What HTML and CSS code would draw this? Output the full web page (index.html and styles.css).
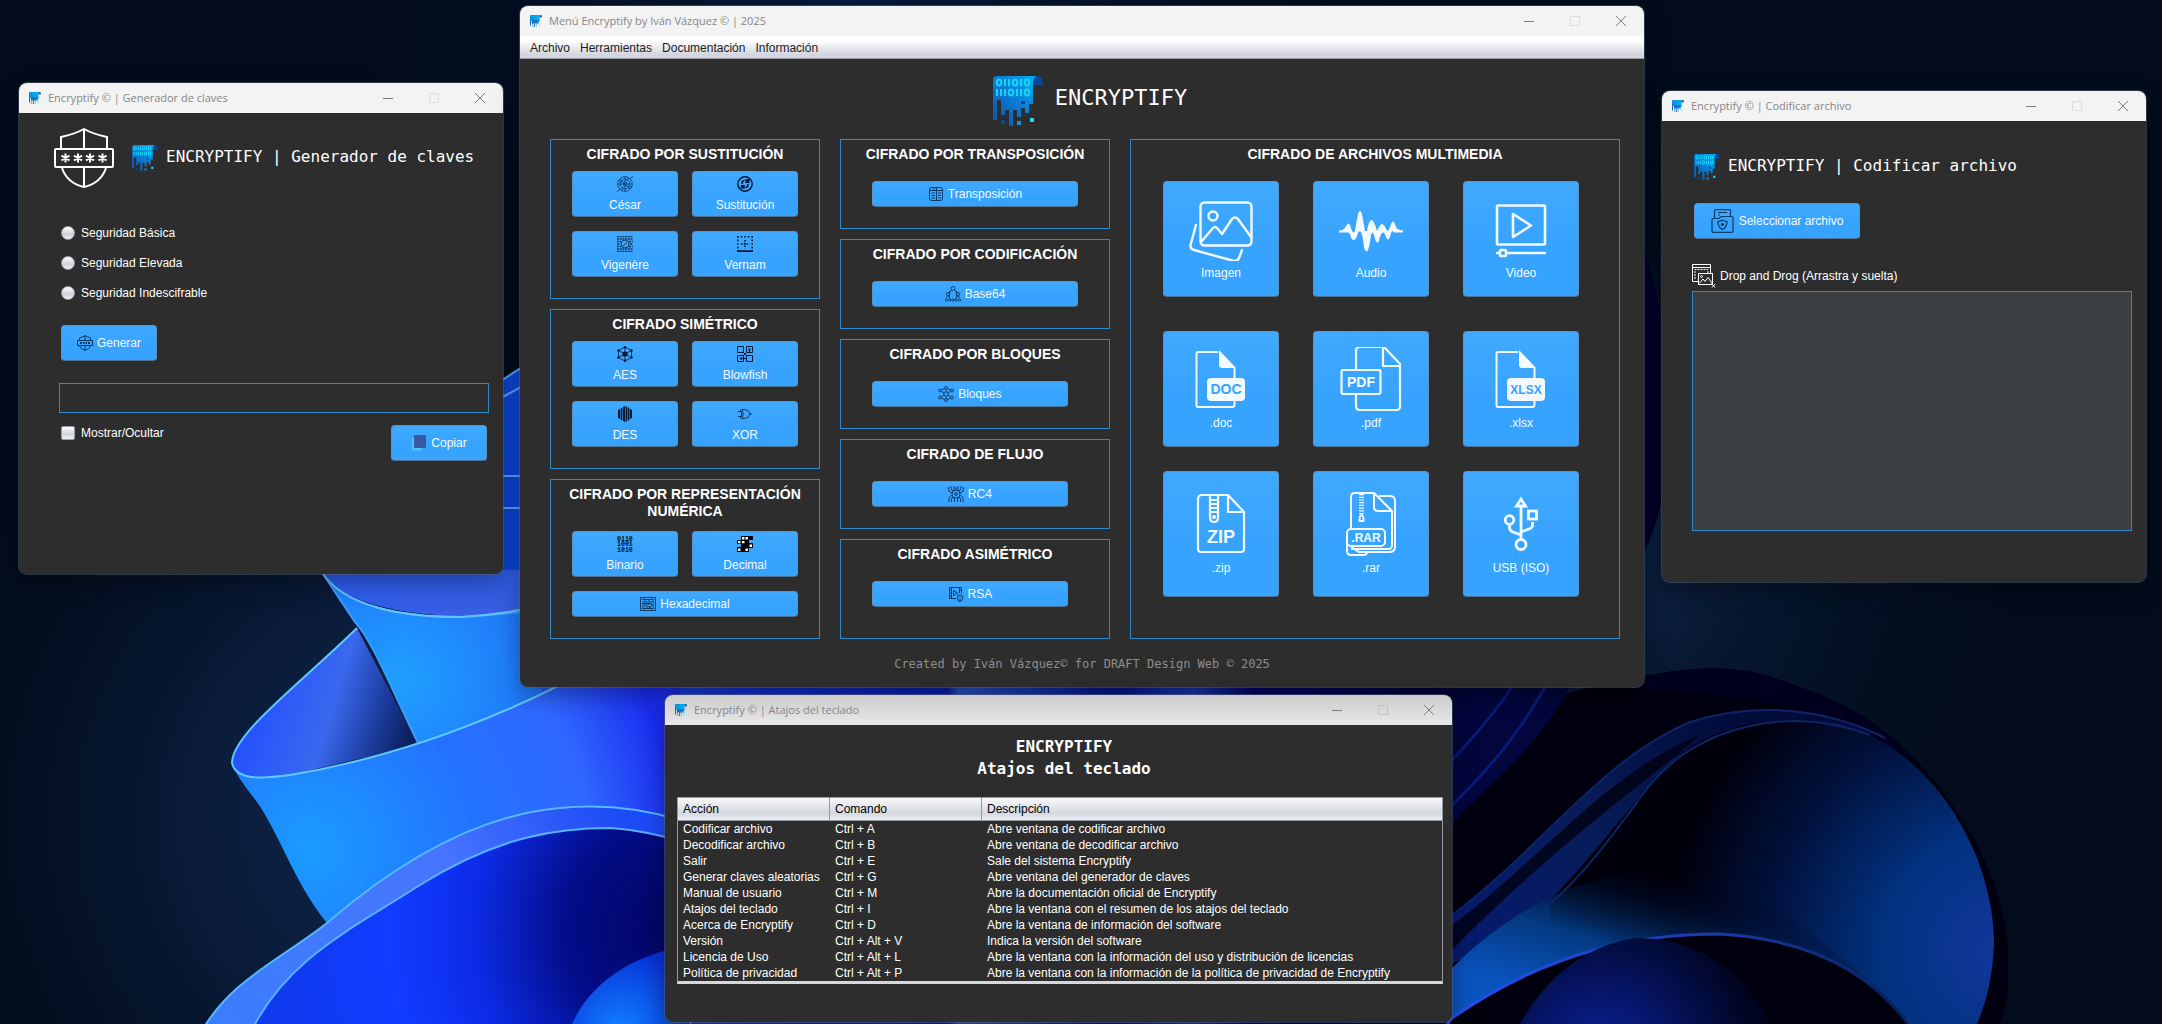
FILE: index.html
```html
<!DOCTYPE html>
<html lang="es">
<head>
<meta charset="utf-8">
<meta name="viewport" content="width=device-width, initial-scale=1">
<title>Encryptify</title>
<link rel="stylesheet" href="styles.css">
</head>
<body>
<svg class="sprite" aria-hidden="true">
  <defs>
    <linearGradient id="logo-fill" x1="0" y1="1" x2="1" y2="0">
      <stop offset="0" stop-color="#0b50a8"/><stop offset=".45" stop-color="#0c78cf"/><stop offset="1" stop-color="#00aef4"/>
    </linearGradient>
  </defs>
  <symbol id="logo" viewBox="0 0 50 50">
    <path fill="url(#logo-fill)" d="M0 4Q0 0 4 0H44Q40 3 40 8V28H36V37H32V32H28V41H24V34H20V50H16V34H12V39H8V24H4V44H0Z"/>
    <path fill="#0a479c" d="M40 9Q40 0 45 0Q50 0 50 9ZM28 25H32V28H28ZM8 44H12V48H8Z"/>
    <path fill="#1d8fd6" d="M24 45H28V49H24Z"/>
    <path fill="#14e0f5" d="M37 42H41V46H37Z"/>
    <g fill="none" stroke="#17d4fa" stroke-width="2">
      <ellipse cx="6" cy="6.500" rx="2.300" ry="3"/><ellipse cx="22" cy="6.500" rx="2.300" ry="3"/><ellipse cx="34" cy="6.500" rx="2.300" ry="3"/>
      <path d="M12 3v7M16 3v7M28 3v7M4 13v7M8 13v7M12 13v7M24 13v7M28 13v7"/>
      <ellipse cx="18" cy="16.500" rx="2.300" ry="3"/><ellipse cx="34" cy="16.500" rx="2.300" ry="3"/>
    </g>
  </symbol>
  <symbol id="shield" viewBox="0 0 60 60">
    <g fill="none" stroke="currentColor" stroke-width="2">
      <path d="M7 20V9Q21 6 30 1Q39 6 53 9V20M30 1V20M8 40Q13 55 30 59Q47 55 52 40M30 40V59"/>
      <rect x="1" y="21" width="58" height="18" rx="1"/>
      <path d="M11.500 25.500v9M7.500 27.700l8 4.600M15.500 27.700l-8 4.600M24 25.500v9M20 27.700l8 4.600M28 27.700l-8 4.600M36 25.500v9M32 27.700l8 4.600M40 27.700l-8 4.600M48.500 25.500v9M44.500 27.700l8 4.600M52.500 27.700l-8 4.600"/>
    </g>
  </symbol>
  <symbol id="shield-sm" viewBox="0 0 16 16">
    <g fill="none" stroke="currentColor">
      <path d="M2.500 5V3L8 .700 13.500 3V5M8 .700V5M2.500 11Q4 14.500 8 15.300Q12 14.500 13.500 11M8 11V15.300"/>
      <rect x=".5" y="5.500" width="15" height="5"/><path stroke-width="2" d="M3 8h2M6 8h1.500M8.500 8H10M11 8h2"/>
    </g>
  </symbol>
  <symbol id="copy" viewBox="0 0 16 16">
    <path fill="#4fc3ff" d="M1 3H4V13H11V15.500H1Z"/><rect x="3" y="0" width="12" height="13" rx="1" fill="#37599f"/>
  </symbol>
  <symbol id="folder" viewBox="0 0 24 24">
    <g fill="none" stroke="currentColor" stroke-width="1.200">
      <path d="M1 22V11Q1 9.500 2.500 9.500H8L10.500 7.500H20.500Q22 7.500 22 9V22Q22 23.300 20.500 23.300H2.500Q1 23.300 1 22Z"/>
      <path d="M3.500 9V1.500Q3.500 .700 4.500 .700H18.500Q19.500 .700 19.500 1.500V7M7 3.500H16M7 6H9"/>
      <path d="M11.500 11Q13.500 12.500 16 12.500Q16 18.500 11.500 20.500Q7 18.500 7 12.500Q9.500 12.500 11.500 11Z"/>
    </g><circle cx="11.500" cy="15.500" r="1.600" fill="currentColor"/>
  </symbol>
  <symbol id="drop" viewBox="0 0 24 24">
    <g fill="none" stroke="currentColor">
      <path d="M6 17.500H.500V.500H18.500V9M.500 3.500H18.500"/><path stroke-dasharray="2 1" d="M3 15V5.500H16V9"/>
      <rect x="6.500" y="9.500" width="14" height="11"/><circle cx="9.500" cy="12.500" r="1"/>
      <path d="M7.500 19L11 15L13 17.500L16 13.500L20 19M19.500 19.500L23 23.500M23 20L20 23.500"/>
    </g>
  </symbol>
  <symbol id="cesar" viewBox="0 0 16 16">
    <g fill="none" stroke="currentColor" stroke-width=".8"><circle cx="8" cy="8" r="7.300"/><circle cx="8" cy="8" r="4.800"/><circle cx="8" cy="8" r="2"/>
    <path d="M8 .700V15.300M.700 8H15.300M3 3L13 13M13 3L16 0M3 13L0 16M1.500 4.500L5 6M11 10l4 1.500M4.500 14.500L6 11M11.500 1.500L10 5"/></g>
  </symbol>
  <symbol id="sustitucion" viewBox="0 0 16 16">
    <circle cx="8" cy="8" r="7.200" fill="none" stroke="currentColor" stroke-width="1.400"/>
    <path fill="currentColor" d="M8.500 3H12.500V7H8.500ZM3.800 9H7.800V12.500H3.800ZM4.500 8V5L7.500 3.500V5L6 6V8ZM11.500 8V11L8.500 12.500V11L10 10V8Z"/>
  </symbol>
  <symbol id="vigenere" viewBox="0 0 16 16">
    <path stroke="currentColor" stroke-width="1.300" stroke-dasharray="2 .7" d="M0 .500H16M0 3H16M0 13H16M0 15.500H16M0 5.500H4M0 8H3M0 10.500H4M12 5.500H16M13 8H16M12 10.500H16"/>
    <circle cx="8" cy="8" r="4" fill="none" stroke="currentColor"/><path stroke="currentColor" d="M6 10L10 6"/>
  </symbol>
  <symbol id="vernam" viewBox="0 0 16 16">
    <g fill="none" stroke="currentColor" stroke-width="1.600"><path stroke-dasharray="1.700 1.875" d="M0 .800H16M.800 0V16M15.200 0V16"/><path stroke-dasharray="1.500 1.250" d="M4 8H12.500M8 4V12.500"/><path stroke-width="1.800" d="M0 15.100H16"/></g>
  </symbol>
  <symbol id="aes" viewBox="0 0 16 16">
    <path fill="none" stroke="currentColor" stroke-width=".8" d="M8 1L14.500 4.500V11.500L8 15L1.500 11.500V4.500ZM8 1V15M1.500 4.500L14.500 11.500M14.500 4.500L1.500 11.500"/>
    <g fill="currentColor"><circle cx="8" cy="8" r="2.600"/><circle cx="8" cy="1.300" r="1.200"/><circle cx="8" cy="14.700" r="1.200"/><circle cx="1.500" cy="4.500" r="1.200"/><circle cx="14.500" cy="4.500" r="1.200"/><circle cx="1.500" cy="11.500" r="1.200"/><circle cx="14.500" cy="11.500" r="1.200"/></g>
  </symbol>
  <symbol id="blowfish" viewBox="0 0 16 16">
    <path fill="none" stroke="currentColor" d="M.500 .500H6.500V6.500H.500ZM9.500 6.500V.500H15.500V6.500ZM9.500 15.500V9.500H15.500V15.500ZM6.500 9.500H.500V15.500H6.500ZM12.500 3V6M6 6L10 10M3 12.500H9.500M9.500 6.500L6.500 9.500"/>
    <path fill="currentColor" d="M7 7h2v2H7zM11.500 2.500h2v2h-2zM3 11.500h2v2H3z"/>
  </symbol>
  <symbol id="des" viewBox="0 0 16 16">
    <path fill="currentColor" d="M1 4L3 3V13L1 12ZM3.600 2.500L5.400 1.500V14.500L3.600 13.500ZM6 1L8 0V16L6 15ZM8.600 0L10 .700V15.300L8.600 16ZM10.600 1.200L12.400 2V14L10.600 14.800ZM13 3L15 4V12L13 13Z"/>
  </symbol>
  <symbol id="xor" viewBox="0 0 16 16">
    <path fill="none" stroke="currentColor" d="M3.500 3.500Q6 8 3.500 12.500M5 3.500H8Q12 4 13 8Q12 12 8 12.500H5Q7.500 8 5 3.500M1 5.500H4.500M1 10.500H4.500M13 8H15"/>
  </symbol>
  <symbol id="decimal" viewBox="0 0 16 16">
    <path d="M4 0H16V4H12V7H16V12H12V16H0V11H4V8H0V4H4Z"/>
    <path fill="#fff" d="M5 1h2.500v2.500H5zM8.500 1H11v2.500H8.500zM1 5h2.500v2.200H1zM5 5h2.500v2.200H5zM12.500 8.500h2.500v2.500h-2.500zM1 12.500h2.500V15H1zM8.500 12.500H11V15H8.500z"/>
  </symbol>
  <symbol id="hexadecimal" viewBox="0 0 16 16">
    <path fill="none" stroke="currentColor" d="M.500 1.500H15.500V14.500H.500ZM2 3.500H14M2 12.500H14M3 5V12M5 4V11M7 5V12M9 4V9M11 5V9M13 4V12M2 7.500H10M8 10L12 13M12 9L9 12"/>
  </symbol>
  <symbol id="transposicion" viewBox="0 0 16 16">
    <g fill="none" stroke="currentColor"><rect x="1.500" y="1.500" width="13" height="13" rx="2"/><path d="M1.500 4.500H14.500M6 1.500V4.500M8.500 1.500V14.500M3.500 7H7M3.500 9.500H7M3.500 12H7M10 7H13M10 9.500H13M10 12H13"/></g>
  </symbol>
  <symbol id="base64" viewBox="0 0 16 16">
    <g fill="none" stroke="currentColor" stroke-width=".9"><circle cx="8" cy="2.500" r="2"/><circle cx="3" cy="8" r="1.600"/><circle cx="13" cy="8" r="1.600"/><circle cx="1.500" cy="14" r="1.200"/><circle cx="5" cy="14" r="1.200"/><circle cx="8" cy="14" r="1.200"/><circle cx="11" cy="14" r="1.200"/><circle cx="14.500" cy="14" r="1.200"/><path d="M6.500 4L4 6.500M9.500 4L12 6.500M2.500 9.500L1.500 12.500M3.500 9.500L5 12.500M12.500 9.500L11 12.500M13.500 9.500L14.500 12.500M5 5L4 11M11 5L12 11"/></g>
  </symbol>
  <symbol id="bloques" viewBox="0 0 16 16">
    <g fill="none" stroke="currentColor"><circle cx="8" cy="8" r="2.200"/><circle cx="8" cy="2" r="1.500"/><circle cx="8" cy="14" r="1.500"/><circle cx="2" cy="4.500" r="1.400"/><circle cx="14" cy="4.500" r="1.400"/><circle cx="2" cy="11.500" r="1.400"/><circle cx="14" cy="11.500" r="1.400"/><path d="M8 3.500V5.500M8 10.500V12.500M3.500 5L6 7M12.500 5L10 7M3.500 11L6 9M12.500 11L10 9M3.500 4L6.500 2.500M12.500 4L9.500 2.500M3.500 12L6.500 13.500M12.500 12L9.500 13.500"/></g>
  </symbol>
  <symbol id="rc4" viewBox="0 0 16 16">
    <g fill="none" stroke="currentColor"><circle cx="8" cy="8" r="4"/><circle cx="8" cy="8" r="1.300"/><path d="M.700 1V5L4 7M15.300 1V5L12 7M3 0V3L5 5M13 0V3L11 5M6 0V4M10 0V4M8 1V4M3.500 9L1 12V16M12.500 9L15 12V16M5 11L3.500 13V16M11 11L12.500 13V16M6.500 12V16M9.500 12V16"/></g>
  </symbol>
  <symbol id="rsa" viewBox="0 0 16 16">
    <g fill="none" stroke="currentColor"><path d="M8 12.500H1.500V1.500H13.500V7M3.500 1.500V12.500M11.500 1.500V7M1.500 4H3.500M1.500 7H3.500M1.500 10H3.500M11.500 4H13.500M5.500 4.500L9.500 7L5.500 9.500Z"/><circle cx="12" cy="11.500" r="2.800"/><path d="M11 11H13M9.500 14L11 15.500L13 15L14.500 14"/></g>
  </symbol>
  <symbol id="imagen" viewBox="0 0 64 64">
    <g fill="none" stroke="currentColor" stroke-width="2.400" stroke-linejoin="round" stroke-linecap="round"><rect x="11.500" y="5.500" width="51" height="43" rx="4"/><circle cx="24" cy="19" r="4.500"/><path d="M12 45L24 31Q26 29 28 31L33 37L43 22Q46 19 49 22L62 40M7 28L1.500 48Q1 52 5 53L45 64Q49 64 50 61L53 53"/></g>
  </symbol>
  <symbol id="audio" viewBox="0 0 64 64">
    <path fill="currentColor" d="M0 33.500Q5 33.500 7 29Q10 23 12 31Q14 38 16 34Q17 26 19 17Q21 11 23 17Q25 28 26 34L28 34Q30 22 33 23Q36 26 38 34Q41 27 43 27Q46 28 48 34Q50 34 52 27Q54 22 56 27Q57 33 64 33.500V35.500H55Q53 31 51 40Q49 45 47 40Q45 34 43 36Q41 38 40 44Q38 48 36 42Q34 32 32 38Q31 48 29 53Q27 57 25 50Q24 40 22 35Q20 33 19 36Q17 43 15 43Q12 43 11 37L9 35.500H0Z"/>
  </symbol>
  <symbol id="video" viewBox="0 0 64 64">
    <g fill="none" stroke="currentColor" stroke-width="2.600" stroke-linejoin="round" stroke-linecap="round"><rect x="8" y="8.500" width="48" height="39" rx="1"/><path d="M24 17V40L42 28.500ZM8 56H10M18 56H56"/><rect x="11" y="53" width="6" height="6" rx="1"/></g>
  </symbol>
  <symbol id="office" viewBox="0 0 64 64">
    <path fill="none" stroke="currentColor" stroke-width="2" d="M29 5H9Q7.500 5 7.500 7V58Q7.500 60 9 60H43Q45.500 60 45.500 58V54M45.500 21V31"/>
    <path fill="currentColor" d="M30 3L47 21H33Q30 21 30 18Z"/><rect x="18" y="31" width="38" height="23" rx="4" fill="currentColor"/>
  </symbol>
  <symbol id="pdf" viewBox="0 0 64 64">
    <g fill="none" stroke="currentColor" stroke-width="2.200" stroke-linejoin="round"><path d="M17 23V4Q17 0 21 0H45L61 17V59Q61 63 57 63H21Q17 63 17 59V47M44 0V19H61"/><rect x="2.500" y="23" width="39" height="24" rx="2"/></g>
  </symbol>
  <symbol id="zip" viewBox="0 0 64 64">
    <g fill="none" stroke="currentColor" stroke-width="2.200" stroke-linejoin="round"><path d="M13 3H39L55 20V57Q55 60 52 60H12Q9 60 9 57V7Q9 3 13 3ZM39 3V20H55M21 4V25Q21 30 25 30Q29 30 29 25V4M21 8H29M21 12H29M21 16H29M21 20H29"/></g>
    <circle cx="25" cy="25" r="2" fill="currentColor"/>
  </symbol>
  <symbol id="rar" viewBox="0 0 64 64">
    <g fill="none" stroke="currentColor" stroke-width="2"><path d="M12 36V5Q12 1 16 1H35L53 19V53Q53 57 49 57H12M35 1V15Q35 19 39 19H53M40 4H51Q56 4 56 9V55Q56 60 50 60H28"/><rect x="8" y="37" width="38" height="17" rx="4"/><path d="M8 44V59Q8 63 12 63H24Q28 63 28 60H20Q16 57 12 55"/><path stroke-width="5" stroke-dasharray="1.200 1.500" d="M22.500 2V22"/><path d="M20.500 29Q20.500 23 22.500 23Q24.500 23 24.500 29Z"/></g>
  </symbol>
  <symbol id="usb" viewBox="0 0 64 64">
    <g fill="none" stroke="currentColor" stroke-width="2.800"><path d="M32 14V47M32 7L27.500 14H36.500ZM20.500 32V36Q21 39 24 40L32 43M43.500 30V34Q43 36 40 37L32 40"/><circle cx="20.500" cy="28" r="4.300"/><rect x="39.500" y="19" width="8" height="8"/><circle cx="32" cy="52.500" r="5"/></g>
  </symbol>
</svg>

<main class="desktop">
  <svg class="wallpaper" viewBox="0 0 2162 1024" preserveAspectRatio="xMidYMid slice" aria-hidden="true">
    <defs>
      <radialGradient id="w-left" gradientUnits="userSpaceOnUse" cx="420" cy="820" r="560"><stop offset="0" stop-color="#0e2648"/><stop offset=".4" stop-color="#0a1c3a"/><stop offset="1" stop-color="#020c1c" stop-opacity="0"/></radialGradient>
      <radialGradient id="w-right" gradientUnits="userSpaceOnUse" cx="1600" cy="560" r="460"><stop offset="0" stop-color="#0d2548"/><stop offset="1" stop-color="#020c1c" stop-opacity="0"/></radialGradient>
      <radialGradient id="w-top" gradientUnits="userSpaceOnUse" cx="850" cy="60" r="560"><stop offset="0" stop-color="#0a1e44"/><stop offset="1" stop-color="#020c1c" stop-opacity="0"/></radialGradient>
      <linearGradient id="p-cup" x1="0" y1="0" x2="1" y2="1"><stop offset="0" stop-color="#2a5cf0"/><stop offset="1" stop-color="#3a5ee0"/></linearGradient>
      <radialGradient id="p-a" gradientUnits="userSpaceOnUse" cx="400" cy="680" r="170"><stop offset="0" stop-color="#1fa0ff"/><stop offset="1" stop-color="#1f6cf8"/></radialGradient>
      <linearGradient id="p-back" gradientUnits="userSpaceOnUse" x1="250" y1="690" x2="410" y2="740"><stop offset="0" stop-color="#2350ff"/><stop offset=".5" stop-color="#3a68ee"/><stop offset=".8" stop-color="#1a3a98"/><stop offset="1" stop-color="#0b1f5c"/></linearGradient>
      <radialGradient id="p-b" gradientUnits="userSpaceOnUse" cx="310" cy="850" r="370"><stop offset="0" stop-color="#1a9cff"/><stop offset=".45" stop-color="#2372ff"/><stop offset=".75" stop-color="#3068ff"/><stop offset="1" stop-color="#1a2cf0"/></radialGradient>
      <linearGradient id="p-c" gradientUnits="userSpaceOnUse" x1="230" y1="1024" x2="620" y2="810"><stop offset="0" stop-color="#3b7dfc"/><stop offset=".6" stop-color="#4775ff"/><stop offset="1" stop-color="#1c4af5"/></linearGradient>
      <radialGradient id="p-core" gradientUnits="userSpaceOnUse" cx="690" cy="930" r="400"><stop offset="0" stop-color="#02055e"/><stop offset=".3" stop-color="#030c86"/><stop offset=".55" stop-color="#0c2ce8"/><stop offset=".75" stop-color="#123cff"/><stop offset="1" stop-color="#0f3af0"/></radialGradient>
      <radialGradient id="p-bud" gradientUnits="userSpaceOnUse" cx="620" cy="1030" r="80"><stop offset="0" stop-color="#1080ff"/><stop offset="1" stop-color="#0832d8"/></radialGradient>
      <linearGradient id="p-mid" gradientUnits="userSpaceOnUse" x1="540" y1="0" x2="1560" y2="0"><stop offset="0" stop-color="#2a58ec"/><stop offset=".2" stop-color="#1230d8"/><stop offset=".4" stop-color="#0a20b0"/><stop offset=".41" stop-color="#2c56cc"/><stop offset=".5" stop-color="#1230b0"/><stop offset=".56" stop-color="#061290"/><stop offset=".64" stop-color="#1a38b8"/><stop offset=".7" stop-color="#02046a"/><stop offset="1" stop-color="#01021c"/></linearGradient>
      <radialGradient id="r-lit" gradientUnits="userSpaceOnUse" cx="2000" cy="950" r="330"><stop offset="0" stop-color="#12379c"/><stop offset=".35" stop-color="#023280"/><stop offset=".7" stop-color="#01123e"/><stop offset="1" stop-color="#00000c"/></radialGradient>
      <linearGradient id="r-band" gradientUnits="userSpaceOnUse" x1="1600" y1="1010" x2="1640" y2="865"><stop offset="0" stop-color="#0a54c0"/><stop offset=".45" stop-color="#033a80"/><stop offset="1" stop-color="#000014" stop-opacity="0"/></linearGradient>
      <radialGradient id="r-bud" gradientUnits="userSpaceOnUse" cx="1600" cy="1060" r="160"><stop offset="0" stop-color="#0b22a0"/><stop offset="1" stop-color="#00041e"/></radialGradient>
      <linearGradient id="r-ridge" gradientUnits="userSpaceOnUse" x1="1452" y1="960" x2="1750" y2="720"><stop offset="0" stop-color="#061a70"/><stop offset=".5" stop-color="#071c58"/><stop offset="1" stop-color="#020a38"/></linearGradient>
      <linearGradient id="r-edge" gradientUnits="userSpaceOnUse" x1="1452" y1="0" x2="1900" y2="0"><stop offset="0" stop-color="#2450f0"/><stop offset=".6" stop-color="#1a38a8"/><stop offset="1" stop-color="#08205c"/></linearGradient>
    </defs>
    <rect width="2162" height="1024" fill="#020c1c"/>
    <rect width="2162" height="1024" fill="url(#w-left)"/><rect width="2162" height="1024" fill="url(#w-right)"/><rect width="2162" height="1024" fill="url(#w-top)"/>
    <path fill="#00002a" d="M1600 180C1650 230 1668 320 1668 400S1662 520 1640 560Z"/>
    <path fill="#0b47dc" d="M480 396L530 360V640H480Z"/>
    <path fill="none" stroke="#5aa8ff" stroke-width="2" d="M490 388L530 362M490 404L530 382M495 476H530M495 508H530"/>
    <path fill="url(#p-back)" d="M357 628C300 684 232 734 232 763C235 780 262 778 290 775L418 745Z"/>
    <path fill="url(#p-cup)" d="M323 570H530V612C480 622 350 618 323 574Z"/>
    <path fill="url(#p-a)" stroke="#3c9cff" stroke-width="2" d="M323 574C345 606 400 617 460 617Q500 615 640 600V700L418 743C392 690 372 640 355 622Z"/>
    <path fill="none" stroke="#63c4ff" stroke-width="2" d="M323 574C345 606 400 617 460 617Q500 615 540 606"/>
    <path fill="url(#p-mid)" d="M540 680H1570L1450 1024H600Z"/>
    <path fill="url(#p-b)" d="M232 763C236 782 268 778 290 775C380 760 460 735 560 685H680V1000H340L327 923C300 890 285 850 268 820C255 795 240 785 232 763Z"/>
    <path fill="none" stroke="#5fc8ff" stroke-width="2" d="M357 628C300 684 232 734 232 763C236 782 268 778 290 775C380 760 470 730 560 685"/>
    <path fill="url(#p-c)" stroke="#58b8ff" stroke-width="2" d="M200 1034C230 980 280 960 327 923C400 860 480 815 560 808C600 804 640 808 680 820V1040H200Z"/>
    <path fill="url(#p-core)" stroke="#58b0ff" stroke-width="2" d="M250 1034C285 960 350 930 420 885C500 835 560 828 610 828Q645 830 690 844V1040H250Z"/>
    <path fill="url(#p-bud)" d="M568 1034C585 985 630 955 690 945V1034Z"/>
    <path fill="#000010" d="M1452 1024V820C1500 760 1530 700 1580 690C1700 660 1745 667 1780 680C1840 700 1880 720 1920 765C1980 830 2008 900 2008 960Q2010 1000 2000 1024Z"/>
    <path fill="#02063c" d="M1452 687H1570C1530 760 1480 790 1452 825Z"/>
    <path fill="none" stroke="#0a1a78" stroke-width="3" d="M1452 760Q1490 720 1512 687M1452 805Q1510 750 1545 687"/>
    <path fill="#00001e" d="M1600 686C1700 660 1745 667 1780 680C1840 700 1880 720 1920 765L1870 735C1800 700 1700 690 1600 686Z"/>
    <path fill="url(#r-ridge)" d="M1452 915C1540 850 1600 760 1690 722C1760 700 1830 710 1885 738C1800 710 1740 720 1690 755C1640 800 1590 900 1550 920L1452 962Z"/>
    <path fill="#00000c" opacity=".75" d="M1452 925C1540 860 1610 770 1700 735C1650 780 1560 840 1452 950Z"/>
    <path fill="url(#r-lit)" d="M1550 900C1600 850 1640 790 1680 755C1730 715 1810 712 1870 735C1950 775 1995 870 1994 945Q1992 990 1977 1024H1550Z"/>
    <path fill="none" stroke="#0c2468" stroke-width="2" d="M1452 915C1540 850 1600 760 1690 722C1760 700 1830 710 1885 738M1452 962C1560 920 1600 850 1650 785C1700 725 1790 705 1870 735"/>
    <path fill="url(#r-band)" d="M1452 968C1540 880 1640 860 1700 875C1780 900 1850 960 1920 1030H1452Z"/>
    <path fill="#00000e" stroke="url(#r-edge)" stroke-width="3" d="M1452 1018C1550 950 1640 934 1720 934C1820 940 1880 980 1915 1034H1440Z"/>
    <path fill="url(#r-bud)" d="M1515 1034C1545 970 1600 940 1640 938C1710 940 1750 980 1775 1034Z"/>
  </svg>

  <section class="window window-keys" aria-label="Generador de claves">
    <header class="titlebar">
      <svg class="app-icon"><use href="#logo"/></svg><span class="caption">Encryptify © | Generador de claves</span>
      <button class="wbtn" aria-label="Minimizar"><svg viewBox="0 0 10 10"><path d="M0 5.500H10"/></svg></button>
      <button class="wbtn" aria-label="Maximizar" disabled><svg viewBox="0 0 10 10"><path d="M.500 .500H9.500V9.500H.500Z"/></svg></button>
      <button class="wbtn" aria-label="Cerrar"><svg viewBox="0 0 10 10"><path d="M0 0L10 10M10 0L0 10"/></svg></button>
    </header>
    <div class="keys-body">
      <div class="heading"><svg class="shield"><use href="#shield"/></svg><svg class="logo-sm"><use href="#logo"/></svg><h2>ENCRYPTIFY | Generador de claves</h2></div>
      <form class="keys-form">
        <div class="options">
          <label><input type="radio" name="nivel"> Seguridad Básica</label>
          <label><input type="radio" name="nivel"> Seguridad Elevada</label>
          <label><input type="radio" name="nivel"> Seguridad Indescifrable</label>
        </div>
        <button type="button" class="btn btn-form"><svg class="ic16"><use href="#shield-sm"/></svg>Generar</button>
        <input class="key-field" type="text" aria-label="Clave generada">
        <div class="key-actions">
          <label><input type="checkbox"> Mostrar/Ocultar</label>
          <button type="button" class="btn btn-form"><svg class="ic16"><use href="#copy"/></svg>Copiar</button>
        </div>
      </form>
    </div>
  </section>

  <section class="window window-menu" aria-label="Menú Encryptify">
    <header class="titlebar">
      <svg class="app-icon"><use href="#logo"/></svg><span class="caption">Menú Encryptify by Iván Vázquez © | 2025</span>
      <button class="wbtn" aria-label="Minimizar"><svg viewBox="0 0 10 10"><path d="M0 5.500H10"/></svg></button>
      <button class="wbtn" aria-label="Maximizar" disabled><svg viewBox="0 0 10 10"><path d="M.500 .500H9.500V9.500H.500Z"/></svg></button>
      <button class="wbtn" aria-label="Cerrar"><svg viewBox="0 0 10 10"><path d="M0 0L10 10M10 0L0 10"/></svg></button>
    </header>
    <nav class="menubar"><button>Archivo</button><button>Herramientas</button><button>Documentación</button><button>Información</button></nav>
    <div class="brand"><svg class="logo-lg"><use href="#logo"/></svg><h1>ENCRYPTIFY</h1></div>
    <div class="board">
      <div class="col">
        <section class="panel"><h3>CIFRADO POR SUSTITUCIÓN</h3>
          <div class="pair">
            <button class="btn btn-stack"><svg class="ic16 faint"><use href="#cesar"/></svg>César</button>
            <button class="btn btn-stack"><svg class="ic16"><use href="#sustitucion"/></svg>Sustitución</button>
            <button class="btn btn-stack"><svg class="ic16 faint"><use href="#vigenere"/></svg>Vigenère</button>
            <button class="btn btn-stack"><svg class="ic16"><use href="#vernam"/></svg>Vernam</button>
          </div></section>
        <section class="panel"><h3>CIFRADO SIMÉTRICO</h3>
          <div class="pair">
            <button class="btn btn-stack"><svg class="ic16"><use href="#aes"/></svg>AES</button>
            <button class="btn btn-stack"><svg class="ic16"><use href="#blowfish"/></svg>Blowfish</button>
            <button class="btn btn-stack"><svg class="ic16"><use href="#des"/></svg>DES</button>
            <button class="btn btn-stack"><svg class="ic16 faint"><use href="#xor"/></svg>XOR</button>
          </div></section>
        <section class="panel"><h3>CIFRADO POR REPRESENTACIÓN NUMÉRICA</h3>
          <div class="pair pair-low">
            <button class="btn btn-stack"><svg class="ic16 bits" viewBox="0 0 17 17"><text x="0" y="5">0110</text><text x="0" y="11">1001</text><text x="0" y="17">1010</text></svg>Binario</button>
            <button class="btn btn-stack"><svg class="ic16"><use href="#decimal"/></svg>Decimal</button>
            <button class="btn btn-row wide"><svg class="ic16 faint"><use href="#hexadecimal"/></svg>Hexadecimal</button>
          </div></section>
      </div>
      <div class="col col-mid">
        <section class="panel"><h3>CIFRADO POR TRANSPOSICIÓN</h3><button class="btn btn-row"><svg class="ic16 faint"><use href="#transposicion"/></svg>Transposición</button></section>
        <section class="panel"><h3>CIFRADO POR CODIFICACIÓN</h3><button class="btn btn-row"><svg class="ic16 faint"><use href="#base64"/></svg>Base64</button></section>
        <section class="panel"><h3>CIFRADO POR BLOQUES</h3><button class="btn btn-row short"><svg class="ic16 faint"><use href="#bloques"/></svg>Bloques</button></section>
        <section class="panel"><h3>CIFRADO DE FLUJO</h3><button class="btn btn-row short"><svg class="ic16 faint"><use href="#rc4"/></svg>RC4</button></section>
        <section class="panel"><h3>CIFRADO ASIMÉTRICO</h3><button class="btn btn-row short"><svg class="ic16 faint"><use href="#rsa"/></svg>RSA</button></section>
      </div>
      <section class="panel panel-media"><h3>CIFRADO DE ARCHIVOS MULTIMEDIA</h3>
        <div class="tiles">
          <button class="btn btn-tile"><svg><use href="#imagen"/></svg>Imagen</button>
          <button class="btn btn-tile"><svg><use href="#audio"/></svg>Audio</button>
          <button class="btn btn-tile"><svg><use href="#video"/></svg>Video</button>
          <button class="btn btn-tile"><svg viewBox="0 0 64 64"><use href="#office"/><text class="tag tag-cut" x="37" y="47" text-anchor="middle">DOC</text></svg>.doc</button>
          <button class="btn btn-tile"><svg viewBox="0 0 64 64"><use href="#pdf"/><text class="tag" x="22" y="40" text-anchor="middle">PDF</text></svg>.pdf</button>
          <button class="btn btn-tile"><svg viewBox="0 0 64 64"><use href="#office"/><text class="tag tag-cut tag-small" x="37" y="47" text-anchor="middle">XLSX</text></svg>.xlsx</button>
          <button class="btn btn-tile tall"><svg viewBox="0 0 64 64"><use href="#zip"/><text class="tag tag-big" x="32" y="51" text-anchor="middle">ZIP</text></svg>.zip</button>
          <button class="btn btn-tile tall"><svg viewBox="0 0 64 64"><use href="#rar"/><text class="tag tag-small" x="27" y="50" text-anchor="middle">.RAR</text></svg>.rar</button>
          <button class="btn btn-tile tall"><svg><use href="#usb"/></svg>USB (ISO)</button>
        </div></section>
    </div>
    <footer class="credit">Created by Iván Vázquez© for DRAFT Design Web © 2025</footer>
  </section>

  <section class="window window-encode" aria-label="Codificar archivo">
    <header class="titlebar">
      <svg class="app-icon"><use href="#logo"/></svg><span class="caption">Encryptify © | Codificar archivo</span>
      <button class="wbtn" aria-label="Minimizar"><svg viewBox="0 0 10 10"><path d="M0 5.500H10"/></svg></button>
      <button class="wbtn" aria-label="Maximizar" disabled><svg viewBox="0 0 10 10"><path d="M.500 .500H9.500V9.500H.500Z"/></svg></button>
      <button class="wbtn" aria-label="Cerrar"><svg viewBox="0 0 10 10"><path d="M0 0L10 10M10 0L0 10"/></svg></button>
    </header>
    <div class="encode-body">
      <div class="heading"><svg class="logo-sm"><use href="#logo"/></svg><h2>ENCRYPTIFY | Codificar archivo</h2></div>
      <button class="btn btn-form btn-file"><svg class="ic24 faint"><use href="#folder"/></svg>Seleccionar archivo</button>
      <p class="drop-label" id="drop-label"><svg class="ic24"><use href="#drop"/></svg>Drop and Drog (Arrastra y suelta)</p>
      <div class="drop-zone" role="group" aria-labelledby="drop-label"></div>
    </div>
  </section>

  <section class="window window-keysheet" aria-label="Atajos del teclado">
    <header class="titlebar titlebar-dim">
      <svg class="app-icon"><use href="#logo"/></svg><span class="caption">Encryptify © | Atajos del teclado</span>
      <button class="wbtn" aria-label="Minimizar"><svg viewBox="0 0 10 10"><path d="M0 5.500H10"/></svg></button>
      <button class="wbtn" aria-label="Maximizar" disabled><svg viewBox="0 0 10 10"><path d="M.500 .500H9.500V9.500H.500Z"/></svg></button>
      <button class="wbtn" aria-label="Cerrar"><svg viewBox="0 0 10 10"><path d="M0 0L10 10M10 0L0 10"/></svg></button>
    </header>
    <div class="sheet-body">
      <h2>ENCRYPTIFY<br>Atajos del teclado</h2>
      <table>
        <thead><tr><th>Acción</th><th>Comando</th><th>Descripción</th></tr></thead>
        <tbody>
          <tr><td>Codificar archivo</td><td>Ctrl + A</td><td>Abre ventana de codificar archivo</td></tr>
          <tr><td>Decodificar archivo</td><td>Ctrl + B</td><td>Abre ventana de decodificar archivo</td></tr>
          <tr><td>Salir</td><td>Ctrl + E</td><td>Sale del sistema Encryptify</td></tr>
          <tr><td>Generar claves aleatorias</td><td>Ctrl + G</td><td>Abre ventana del generador de claves</td></tr>
          <tr><td>Manual de usuario</td><td>Ctrl + M</td><td>Abre la documentación oficial de Encryptify</td></tr>
          <tr><td>Atajos del teclado</td><td>Ctrl + I</td><td>Abre la ventana con el resumen de los atajos del teclado</td></tr>
          <tr><td>Acerca de Encryptify</td><td>Ctrl + D</td><td>Abre la ventana de información del software</td></tr>
          <tr><td>Versión</td><td>Ctrl + Alt + V</td><td>Indica la versión del software</td></tr>
          <tr><td>Licencia de Uso</td><td>Ctrl + Alt + L</td><td>Abre la ventana con la información del uso y distribución de licencias</td></tr>
          <tr><td>Política de privacidad</td><td>Ctrl + Alt + P</td><td>Abre la ventana con la información de la política de privacidad de Encryptify</td></tr>
        </tbody>
      </table>
    </div>
  </section>
</main>
</body>
</html>
```
FILE: styles.css
```css
* { box-sizing: border-box; }
body { margin: 0; font: 12px/16px "Liberation Sans", Arial, sans-serif; color: #fff; background: #020c1c; }
h1, h2, h3, p { margin: 0; font-weight: normal; }
button, input { font: inherit; }
svg { flex: none; overflow: visible; }
.sprite { position: absolute; width: 0; height: 0; }

.desktop { position: relative; min-height: 100vh; overflow: hidden; }
.wallpaper { position: absolute; inset: 0; width: 100%; height: 100%; overflow: hidden; }

/* Windows on the desktop */
.window { position: absolute; background: #2d2d2d; border-radius: 8px; overflow: hidden; box-shadow: 0 0 0 1px rgba(90, 100, 120, .5), 0 8px 24px rgba(0, 0, 0, .35); }
.window-keys { left: 19px; top: 83px; width: 484px; min-height: 491px; }
.window-menu { left: 520px; top: 6px; width: 1124px; min-height: 681px; }
.window-encode { right: 16px; top: 91px; width: 484px; min-height: 491px; }
.window-keysheet { left: 665px; top: 695px; width: 787px; min-height: 327px; }

.titlebar { display: flex; align-items: center; height: 30px; padding-left: 10px; background: #f3f3f3; color: #868686; }
.titlebar-dim { background: linear-gradient(#cbcbcb, #e8e8e8); }
.app-icon { width: 12px; height: 12px; margin-right: 7px; }
.caption { flex: 1; font: 11px/16px "Open Sans", "Noto Sans", sans-serif; }
.wbtn { display: grid; place-items: center; width: 46px; height: 30px; padding: 0; border: 0; background: none; }
.wbtn svg { width: 10px; height: 10px; fill: none; stroke: #7c7c7c; }
.wbtn:disabled svg { stroke: #dcdcdc; }
.titlebar-dim .wbtn:disabled svg { stroke: #c4c4c4; }

/* Shared controls */
.btn { display: flex; align-items: center; justify-content: center; gap: 4px; padding: 0; color: #f2faff; background: linear-gradient(#40a9ff, #36a3ff 60%); border: 1px solid #5d93c6; border-bottom-color: #4d6f90; border-radius: 4px; line-height: 16px; }
.ic16 { width: 16px; height: 16px; color: #001833; }
.ic24 { width: 24px; height: 24px; }
.faint { color: #0b3a66; }
.btn-stack { flex-direction: column; gap: 5px; height: 46px; }
.btn-row { height: 26px; }
.btn-form { width: 96px; height: 36px; }
.btn-form .ic16 { color: #0b3a66; }
.bits { font: bold 7px "Liberation Mono", monospace; fill: #001020; }

h1 { font: 22px/26px "DejaVu Sans Mono", monospace; }
h2 { font: 16px/22px "DejaVu Sans Mono", monospace; }
.heading { display: flex; align-items: center; }
.heading h2 { padding-bottom: 3px; }
.logo-sm { width: 26px; height: 26px; margin-right: 8px; }

/* Key generator */
.keys-body { padding: 15px 14px 0 35px; }
.shield { width: 60px; height: 60px; margin-right: 18px; }
.keys-form { display: flex; flex-direction: column; padding-left: 5px; }
.options { display: flex; flex-direction: column; margin-top: 30px; }
.options label { display: flex; align-items: center; height: 30px; }
.keys-form label { display: flex; align-items: center; }
.keys-form > .btn { margin: 17px 0 22px 2px; }
input[type="radio"], input[type="checkbox"] { appearance: none; width: 14px; height: 14px; margin: 0 6px 0 2px; border: 1px solid #9a9da6; background: linear-gradient(#fff, #cfd2da 60%, #f0f1f5); border-radius: 2px; }
input[type="radio"] { border-radius: 50%; }
.key-field { width: 100%; height: 30px; padding: 0 6px; color: #fff; background: transparent; border: 1px solid #2f8acb; }
.key-actions { display: flex; justify-content: space-between; align-items: flex-start; margin-top: 12px; padding-right: 2px; }

/* Main menu */
.menubar { display: flex; height: 23px; padding-left: 5px; background: linear-gradient(#fff 20%, #d3d6df 85%); border-bottom: 1px solid #9a9da8; }
.menubar button { padding: 1px 5px 0; border: 0; background: none; color: #1c1c1c; }
.brand { display: flex; justify-content: center; align-items: center; gap: 12px; padding: 17px 0 13px 16px; }
.brand h1 { padding-bottom: 6px; }
.logo-lg { width: 50px; height: 50px; }
.board { display: grid; grid-template-columns: 270fr 270fr 490fr; gap: 20px; padding: 0 24px 0 30px; }
.col { display: grid; grid-template-rows: repeat(3, 160px); gap: 10px; }
.col-mid { grid-template-rows: repeat(4, 90px) 100px; }
.panel { padding: 6px 21px 0; border: 1px solid #2f8acb; }
.panel h3 { margin: 0 -16px; font-weight: bold; font-size: 14px; line-height: 17px; text-align: center; }
.pair { display: grid; grid-template-columns: 1fr 1fr; gap: 14px; padding-top: 8px; }
.pair-low { padding-top: 11px; }
.wide { grid-column: 1 / -1; }
.col-mid .panel { padding: 6px 31px 0; }
.col-mid .btn { width: 100%; margin-top: 18px; }
.col-mid .short { width: 95%; }
.panel-media { padding: 6px 32px 0; }
.tiles { display: grid; grid-template-columns: repeat(3, 116px); grid-template-rows: 126px 116px 126px; gap: 24px 34px; padding-top: 18px; }
.btn-tile { flex-direction: column; height: 116px; }
.btn-tile.tall { height: 126px; }
.btn-tile svg { width: 64px; height: 64px; }
.tag { font: bold 14px "Liberation Sans", sans-serif; fill: currentColor; }
.tag-cut { fill: #36a3ff; }
.tag-small { font-size: 12px; }
.tag-big { font-size: 18px; }
.credit { padding-top: 17px; text-align: center; color: #8d8d8d; font: 12px/16px "DejaVu Sans Mono", monospace; }

/* File encoder */
.encode-body { padding: 33px 14px 0 30px; }
.encode-body .heading { padding-left: 2px; }
.btn-file { width: 166px; margin: 23px 0 0 2px; }
.drop-label { display: flex; align-items: center; gap: 4px; height: 24px; margin: 25px 0 3px; }
.drop-zone { height: 240px; background: #3c3f41; border: 1px solid #2f8acb; }

/* Shortcut sheet */
.sheet-body { padding: 11px 9px 0 12px; }
.sheet-body h2 { font-weight: bold; text-align: center; padding: 0 0 17px 8px; }
table { width: 100%; table-layout: fixed; border-collapse: separate; border-spacing: 0; border: 1px solid #9298a3; border-bottom: 3px solid #d6d8de; }
th, td { padding: 0 0 0 5px; text-align: left; white-space: nowrap; line-height: 16px; height: 16px; }
th { height: 23px; font-weight: normal; color: #000; background: linear-gradient(#f8f8fa, #d5d8df 70%, #eceef2); border-right: 1px solid #9298a3; border-bottom: 1px solid #9298a3; }
th:nth-child(-n+2) { width: 152px; }
th:last-child { border-right: 0; }
```
